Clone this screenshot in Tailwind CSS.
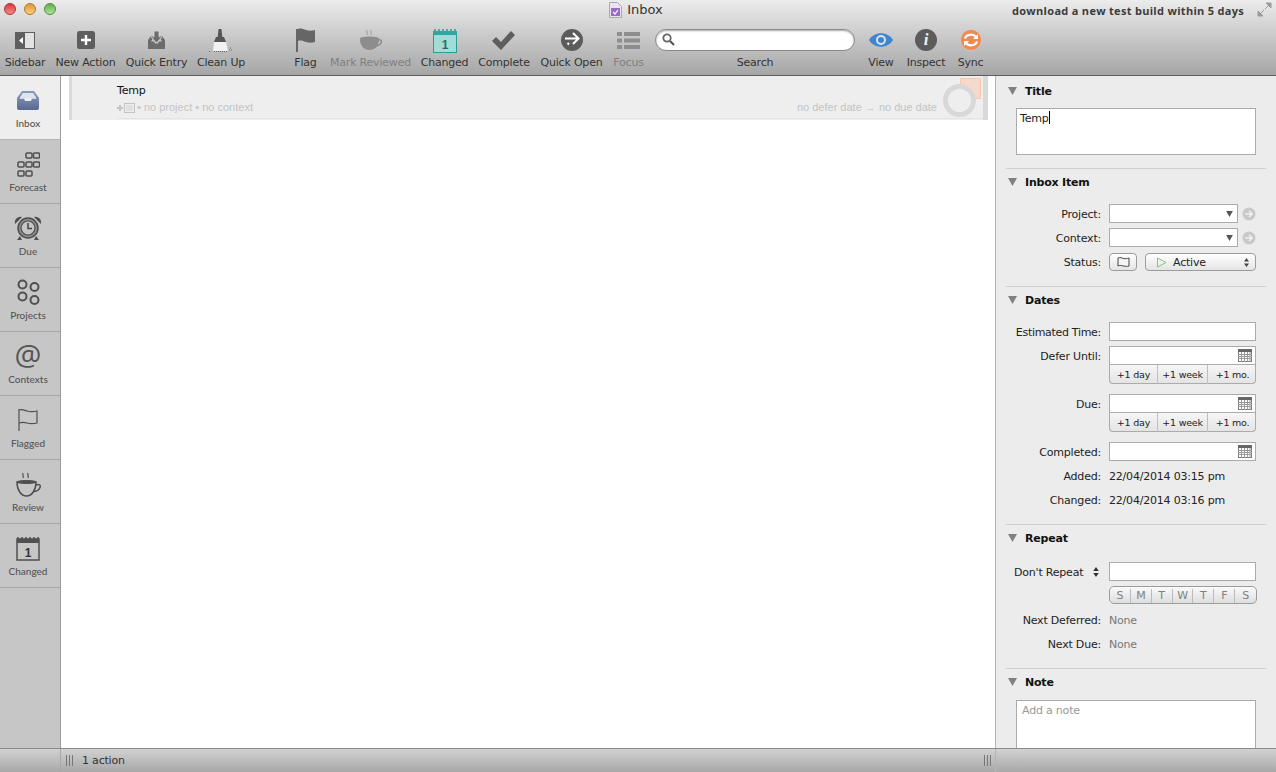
<!DOCTYPE html>
<html lang="en">
<head>
  <meta charset="UTF-8" />
  <title>Inbox</title>
  <script src="https://cdn.jsdelivr.net/npm/@tailwindcss/browser@4"></script>
</head>
<body class="w-[1276px] h-[772px] overflow-hidden flex flex-col bg-white text-[11px] text-[#222] [font-family:'DejaVu_Sans',sans-serif] tracking-[-0.2px] whitespace-nowrap">
  <svg class="hidden">
    <symbol id="cal" viewBox="0 0 14 13">
      <rect x="0.5" y="0.5" width="13" height="12" fill="#fff" stroke="#777"/>
      <rect x="0" y="0" width="14" height="3" fill="#666"/>
      <path d="M0 5.5h14M0 7.5h14M0 9.5h14M3.5 3v10M6.5 3v10M9.5 3v10M12 3v10" stroke="#999" stroke-width="1" fill="none"/>
    </symbol>
    <symbol id="go" viewBox="0 0 14 14">
      <circle cx="7" cy="7" r="6.5" fill="#c8c8c8"/>
      <path d="M3 7h7M7 3.8 10.2 7 7 10.2" stroke="#f0f0f0" stroke-width="1.4" fill="none"/>
    </symbol>
    <symbol id="tri" viewBox="0 0 9 8">
      <path d="M0 0h9L4.5 8z" fill="#808080"/>
    </symbol>
  </svg>

  <!-- title bar + toolbar -->
  <header class="h-[76px] shrink-0 bg-gradient-to-b from-[#ececec] to-[#a6a6a6] border-b border-[#5c5c5c] flex flex-col">
    <div class="h-[20px] relative flex items-center justify-center">
      <div class="absolute left-[4px] top-[3px] flex gap-[8px]">
        <span class="w-[12px] h-[12px] rounded-full border border-[#a33] bg-gradient-to-b from-[#d9363a] to-[#f58a8a]"></span>
        <span class="w-[12px] h-[12px] rounded-full border border-[#b07a2c] bg-gradient-to-b from-[#e0952f] to-[#fbd084]"></span>
        <span class="w-[12px] h-[12px] rounded-full border border-[#4f8f3f] bg-gradient-to-b from-[#5fae4a] to-[#b2e39c]"></span>
      </div>
      <div class="flex items-center gap-[5px] ml-[-4px]">
        <svg width="13" height="16" viewBox="0 0 13 16"><path d="M.5.5h8l4 4v11H.5z" fill="#e9e4f0" stroke="#aaa"/><rect x="2" y="6" width="9" height="8" fill="#9a6cc4"/><path d="M4 10l2 2 3-4" stroke="#fff" stroke-width="1.2" fill="none"/></svg>
        <span class="text-[13px] text-[#333] tracking-normal">Inbox</span>
      </div>
      <span class="absolute left-[1012px] top-[3px] font-bold text-[#3c3c3c] [font-family:'Open_Sans',sans-serif] tracking-[0.3px]">download a new test build within 5 days</span>
      <svg class="absolute left-[1257px] top-[2px]" width="15" height="15" viewBox="0 0 15 15"><path d="M9 1h5v5zM1 9v5h5zM11 4 8 7M4 11l3-3" fill="#9a9a9a" stroke="#9a9a9a"/></svg>
    </div>

    <div class="flex-1 flex pl-[5px] text-[#333]">
      <div class="w-[40px] flex flex-col items-center">
        <div class="h-[35px] pt-[5px] flex items-center">
          <svg width="20" height="17" viewBox="0 0 20 17"><rect width="20" height="17" fill="#5f5f5f"/><rect x="10" y="1" width="9" height="15" fill="#e2e2e2"/><path d="M8 5v7L4 8.5z" fill="#fff"/></svg>
        </div>
        <span>Sidebar</span>
      </div>
      <div class="w-[61px] ml-[10px] flex flex-col items-center">
        <div class="h-[35px] pt-[5px] flex items-center">
          <svg width="18" height="18" viewBox="0 0 18 18"><rect width="18" height="18" rx="2.5" fill="#5e5e5e"/><path d="M9 4v10M4 9h10" stroke="#fff" stroke-width="2.4"/></svg>
        </div>
        <span>New Action</span>
      </div>
      <div class="w-[61px] ml-[10px] flex flex-col items-center">
        <div class="h-[35px] pt-[5px] flex items-center">
          <svg width="19" height="20" viewBox="0 0 19 20"><path d="M1 10 4 6h3v3H5.500L4 11.500h3l1 2h3l1-2h3L13.500 9H12V6h3l3 4v9H1z" fill="#6c6c6c"/><path d="M7 1h5v6h3l-5.500 6L4 7h3z" fill="#6c6c6c" stroke="#ddd" stroke-width=".8"/></svg>
        </div>
        <span>Quick Entry</span>
      </div>
      <div class="w-[48px] ml-[10px] flex flex-col items-center">
        <div class="h-[35px] pt-[5px] flex items-center">
          <svg width="24" height="25" viewBox="0 0 24 25"><path d="M9.500 1h3l.8 8h-4.600z" fill="#555"/><path d="M7 9h8l2 5H5z" fill="#555"/><path d="M5 14h12l2 9H4z" fill="#f2f2f2"/><path d="M0 23.500h2M5 23.500h14M20 22h3M21 20h2" stroke="#666" stroke-dasharray="1 1"/></svg>
        </div>
        <span>Clean Up</span>
      </div>
      <div class="w-[21px] ml-[50px] flex flex-col items-center">
        <div class="h-[35px] pt-[5px] flex items-center">
          <svg width="20" height="24" viewBox="0 0 20 24"><path d="M1 1v23" stroke="#666" stroke-width="2"/><path d="M2 1c3-1 5 0 8 1s6 1 9 0v12c-3 1-6 1-9 0s-5-2-8-1z" fill="#666"/></svg>
        </div>
        <span>Flag</span>
      </div>
      <div class="w-[79px] ml-[15px] flex flex-col items-center text-[#808080]">
        <div class="h-[35px] pt-[4px] flex items-center">
          <svg width="22" height="22" viewBox="0 0 22 22"><path d="M7 1c-1 2 1 2 0 5M11 1c-1 2 1 2 0 5" stroke="#999" fill="none"/><ellipse cx="9.500" cy="9.500" rx="9.500" ry="2" fill="#8d8d8d"/><path d="M0 10h19c0 7-4 11-9.500 11S0 17 0 10z" fill="#8d8d8d"/><path d="M18 11c3-1 4 1 3 3s-4 3-6 3" stroke="#8d8d8d" stroke-width="1.600" fill="none"/></svg>
        </div>
        <span>Mark Reviewed</span>
      </div>
      <div class="w-[47px] ml-[11px] flex flex-col items-center">
        <div class="h-[35px] pt-[5px] flex items-center">
          <svg width="24" height="25" viewBox="0 0 24 25"><rect x="0.500" y="3.500" width="23" height="21" fill="#a3dbd6" stroke="#2d9c97"/><rect x="0" y="3" width="24" height="4" fill="#2fa8a2"/><path d="M2 3V1M6 3V1M10 3V1M14 3V1M18 3V1M22 3V1" stroke="#2d9c97" stroke-width="1.500"/><text x="12" y="21" text-anchor="middle" font-size="12" font-weight="bold" fill="#1f6f6b" font-family="Liberation Sans">1</text></svg>
        </div>
        <span>Changed</span>
      </div>
      <div class="w-[52px] ml-[10px] flex flex-col items-center">
        <div class="h-[35px] pt-[5px] flex items-center">
          <svg width="24" height="19" viewBox="0 0 24 19"><path d="M0 10l4-4 5 5L19 0l4 4L9 19z" fill="#5e5e5e"/></svg>
        </div>
        <span>Complete</span>
      </div>
      <div class="w-[63px] ml-[10px] flex flex-col items-center">
        <div class="h-[35px] pt-[5px] flex items-center">
          <svg width="22" height="22" viewBox="0 0 22 22"><circle cx="11" cy="11" r="11" fill="#5c5c5c"/><path d="M4 9.500h13M12 4l5.500 5.500L12 15M8 15.500 6.500 14" stroke="#fff" stroke-width="2" fill="none"/></svg>
        </div>
        <span>Quick Open</span>
      </div>
      <div class="w-[31px] ml-[10px] flex flex-col items-center text-[#808080]">
        <div class="h-[35px] pt-[5px] flex items-center">
          <svg width="23" height="17" viewBox="0 0 23 17"><path d="M0 0h5v4H0zM7 0h16v4H7zM0 6.500h5v4H0zM7 6.500h16v4H7zM0 13h5v4H0zM7 13h16v4H7z" fill="#8e8e8e"/></svg>
        </div>
        <span>Focus</span>
      </div>
      <div class="w-[200px] ml-[11px] flex flex-col items-center">
        <div class="h-[35px] pt-[4px] flex items-center w-full">
          <div class="w-full h-[22px] rounded-full bg-white border border-[#8a8a8a] shadow-[inset_0_1px_2px_#aaa] flex items-center pl-[6px]">
            <svg width="13" height="13" viewBox="0 0 13 13"><circle cx="5" cy="5" r="3.700" fill="none" stroke="#666" stroke-width="1.800"/><path d="M8 8l4 4" stroke="#555" stroke-width="2.200"/></svg>
          </div>
        </div>
        <span>Search</span>
      </div>
      <div class="w-[26px] ml-[13px] flex flex-col items-center">
        <div class="h-[35px] pt-[5px] flex items-center">
          <svg width="24" height="14" viewBox="0 0 24 14"><path d="M0 7c5-9 19-9 24 0-5 9-19 9-24 0z" fill="#3f85cf"/><circle cx="12" cy="7" r="5" fill="#d8e6f5"/><circle cx="12" cy="7" r="3" fill="#3f85cf"/></svg>
        </div>
        <span>View</span>
      </div>
      <div class="w-[38px] ml-[13px] flex flex-col items-center">
        <div class="h-[35px] pt-[5px] flex items-center">
          <div class="w-[22px] h-[22px] rounded-full bg-[#5c5c5c] text-[#f0f0f0] flex items-center justify-center font-bold italic text-[17px] [font-family:'Liberation_Serif',serif]">i</div>
        </div>
        <span>Inspect</span>
      </div>
      <div class="w-[25px] ml-[13px] flex flex-col items-center">
        <div class="h-[35px] pt-[5px] flex items-center">
          <svg width="22" height="22" viewBox="0 0 22 22"><circle cx="11" cy="11" r="10.500" fill="#ee8a55" stroke="#d9d9d9" stroke-width=".6"/><path d="M5 9.500c1-4 8-5.500 11-1.500M17 12.500c-1 4-8 5.500-11 1.500" stroke="#fff" stroke-width="2.200" fill="none"/><path d="M18 5v5h-5zM4 17v-5h5z" fill="#fff"/></svg>
        </div>
        <span>Sync</span>
      </div>
    </div>
  </header>

  <div class="flex-1 flex min-h-0">
    <!-- left tabs -->
    <nav class="w-[61px] shrink-0 flex flex-col bg-[#c6c6c6] border-r border-[#9c9c9c] text-[10px] text-[#555] tracking-normal [font-family:'Lato',sans-serif] font-medium">
      <div class="h-[64px] w-[60px] -mr-px bg-[#eeeeee] border-b border-[#b4b4b4] flex flex-col items-center pr-[4px] shrink-0">
        <div class="h-[40px] pt-[8px] flex items-center">
          <svg width="22" height="19" viewBox="0 0 22 19"><defs><linearGradient id="ib" x1="0" x2="0" y1="0" y2="1"><stop offset="0" stop-color="#8a9abc"/><stop offset="1" stop-color="#5a6b93"/></linearGradient></defs><path d="M5 0h12l5 7v10a2 2 0 0 1-2 2H2a2 2 0 0 1-2-2V7zM6 2 2.500 7.500H7l1 2.500h6l1-2.500h4.500L16 2z" fill="url(#ib)" fill-rule="evenodd"/><path d="M6 2h10l3.500 5.500H2.500z" fill="#dfe3ec"/></svg>
        </div>
        <span>Inbox</span>
      </div>
      <div class="h-[64px] border-b border-[#a8a8a8] flex flex-col items-center pr-[4px] shrink-0">
        <div class="h-[40px] pt-[8px] flex items-center">
          <svg width="23" height="25" viewBox="0 0 23 25" fill="none" stroke="#4f4f4f" stroke-width="1.500"><rect x="9" y="1" width="6" height="5" rx="1"/><rect x="16.500" y="1" width="6" height="5" rx="1"/><rect x="1" y="10" width="6" height="5" rx="1"/><rect x="9" y="10" width="6" height="5" rx="1"/><rect x="16.500" y="10" width="6" height="5" rx="1"/><rect x="1" y="19" width="6" height="5" rx="1"/><rect x="9" y="19" width="6" height="5" rx="1"/></svg>
        </div>
        <span>Forecast</span>
      </div>
      <div class="h-[64px] border-b border-[#a8a8a8] flex flex-col items-center pr-[4px] shrink-0">
        <div class="h-[40px] pt-[8px] flex items-center">
          <svg width="28" height="25" viewBox="0 0 28 25"><path d="M1 8C0 3 4 0 8 1zM27 8c1-5-3-8-7-7z" fill="#4f4f4f"/><circle cx="14" cy="12" r="10" fill="#8a8a8a" stroke="#4f4f4f" stroke-width="1.500"/><circle cx="14" cy="12" r="7" fill="#c6c6c6" stroke="#4f4f4f" stroke-width="1.200"/><path d="M14 7v5.500h4" stroke="#444" stroke-width="1.500" fill="none"/><path d="M6 20l-3 4h5zM22 20l3 4h-5z" fill="#4f4f4f"/></svg>
        </div>
        <span>Due</span>
      </div>
      <div class="h-[64px] border-b border-[#a8a8a8] flex flex-col items-center pr-[4px] shrink-0">
        <div class="h-[40px] pt-[8px] flex items-center">
          <svg width="23" height="26" viewBox="0 0 23 26" fill="none" stroke="#4f4f4f" stroke-width="2"><circle cx="5.500" cy="5.500" r="4"/><circle cx="17.500" cy="8" r="4"/><circle cx="5.500" cy="17.500" r="4"/><circle cx="17.500" cy="21" r="4"/></svg>
        </div>
        <span>Projects</span>
      </div>
      <div class="h-[64px] border-b border-[#a8a8a8] flex flex-col items-center pr-[4px] shrink-0">
        <div class="h-[40px] pt-[6px] flex items-center text-[30px] leading-none text-[#555] font-normal [font-family:'Open_Sans',sans-serif]">@</div>
        <span>Contexts</span>
      </div>
      <div class="h-[64px] border-b border-[#a8a8a8] flex flex-col items-center pr-[4px] shrink-0">
        <div class="h-[40px] pt-[8px] flex items-center">
          <svg width="20" height="22" viewBox="0 0 20 22" fill="none" stroke="#4f4f4f" stroke-width="1.200"><path d="M1 0v22"/><path d="M1 1c3-1 5 0 8 1s6 1 10 0v12c-4 1-7 1-10 0s-5-1-8 0"/></svg>
        </div>
        <span>Flagged</span>
      </div>
      <div class="h-[64px] border-b border-[#a8a8a8] flex flex-col items-center pr-[4px] shrink-0">
        <div class="h-[40px] pt-[8px] flex items-center">
          <svg width="25" height="25" viewBox="0 0 25 25" fill="none" stroke="#4f4f4f"><path d="M7 1c-1 2 1 2 0 5M12 1c-1 2 1 2 0 5" stroke-width="1.200"/><path d="M1 10h19c0 8-4 14-9.500 14S1 18 1 10z" stroke-width="1.500"/><ellipse cx="10.500" cy="10" rx="9.500" ry="1.500" fill="#4f4f4f"/><path d="M20 13c3-1 5 0 4 2.500s-4 4-6.500 4" stroke-width="1.500"/></svg>
        </div>
        <span>Review</span>
      </div>
      <div class="h-[64px] border-b border-[#a8a8a8] flex flex-col items-center pr-[4px] shrink-0">
        <div class="h-[40px] pt-[8px] flex items-center">
          <svg width="24" height="25" viewBox="0 0 24 25"><rect x="1" y="3" width="22" height="21" fill="#c6c6c6" stroke="#4f4f4f" stroke-width="1.500"/><rect x="1" y="3" width="22" height="4" fill="#4f4f4f"/><path d="M2 3V1M6 3V1M10 3V1M14 3V1M18 3V1M22 3V1" stroke="#4f4f4f" stroke-width="1.500"/><text x="12" y="21" text-anchor="middle" font-size="12" font-weight="bold" fill="#333" font-family="Liberation Sans">1</text></svg>
        </div>
        <span>Changed</span>
      </div>
    </nav>

    <!-- main list -->
    <main class="flex-1 min-w-0 bg-white pl-[8px] pr-[7px]">
      <div class="relative h-[44px] bg-[#eeeeee] border-l-[3px] border-r-[5px] border-[#d9d9d9] flex flex-col pl-[45px]">
        <div class="h-[29px] pt-[7px] text-[#111] leading-[15px]">Temp</div>
        <div class="flex items-center text-[#c4c4c4] tracking-normal [font-family:'Liberation_Sans',sans-serif] border-b border-[#e4e4e4] h-[15px] -mt-[5px] pb-[3px] box-content">
          <svg width="18" height="10" viewBox="0 0 18 10"><path d="M3 2v6M0 5h6" stroke="#c4c4c4" stroke-width="2"/><rect x="7.500" y="0.500" width="10" height="9" fill="none" stroke="#c4c4c4"/><path d="M9 3h7M9 5h7M9 7h7" stroke="#c4c4c4" stroke-width=".7"/></svg>
          <span class="ml-[2px]">• no project • no context</span>
          <span class="ml-auto mr-[46px]">no defer date → no due date</span>
        </div>
        <div class="absolute right-[2px] top-[2px] w-[21px] h-[21px] bg-[#f6d8cc] border border-[#f7c8ae]"></div>
        <div class="absolute right-[7px] top-[8px] w-[33px] h-[33px] rounded-full border-[5px] border-[#d8d8d8] bg-[#eeeeee]"></div>
      </div>
    </main>

    <!-- inspector -->
    <aside class="w-[281px] shrink-0 bg-[#ececec] border-l border-[#b4b4b4] pl-[10px] pr-[10px] overflow-hidden text-[#222]">
      <section class="h-[93px] border-b border-[#cfcfcf] pt-[8px]">
        <div class="flex items-center h-[14px] font-bold text-[#111] gap-[8px] pl-[2px]">
          <svg width="9" height="8"><use href="#tri"/></svg><span class="pt-[2px]">Title</span>
        </div>
        <div class="mt-[10px] ml-[10px] w-[240px] h-[47px] bg-white border border-[#ababab] px-[3px] py-[2px] leading-[14px]">Temp<span class="inline-block w-px h-[13px] bg-black align-[-2px]"></span></div>
      </section>

      <section class="h-[118px] border-b border-[#cfcfcf] pt-[6px]">
        <div class="flex items-center h-[14px] font-bold text-[#111] gap-[8px] pl-[2px]">
          <svg width="9" height="8"><use href="#tri"/></svg><span class="pt-[2px]">Inbox Item</span>
        </div>
        <div class="mt-[15px] flex flex-col gap-[5px]">
          <div class="flex items-center h-[19px]">
            <label class="w-[95px] text-right pt-[4px]">Project:</label>
            <div class="ml-[8px] w-[129px] h-[19px] bg-white border border-[#ababab] flex items-center justify-end pr-[4px]"><svg width="7" height="6" viewBox="0 0 9 8"><path d="M0 0h9L4.500 8z" fill="#555"/></svg></div>
            <svg class="ml-[4px]" width="14" height="14"><use href="#go"/></svg>
          </div>
          <div class="flex items-center h-[19px]">
            <label class="w-[95px] text-right pt-[4px]">Context:</label>
            <div class="ml-[8px] w-[129px] h-[19px] bg-white border border-[#ababab] flex items-center justify-end pr-[4px]"><svg width="7" height="6" viewBox="0 0 9 8"><path d="M0 0h9L4.500 8z" fill="#555"/></svg></div>
            <svg class="ml-[4px]" width="14" height="14"><use href="#go"/></svg>
          </div>
          <div class="flex items-center h-[19px]">
            <label class="w-[95px] text-right pt-[4px]">Status:</label>
            <div class="ml-[8px] mt-[1px] w-[28px] h-[18px] rounded-[4px] border border-[#9c9c9c] bg-gradient-to-b from-[#ffffff] to-[#e4e4e4] flex items-center justify-center">
              <svg width="13" height="10" viewBox="0 0 13 10"><path d="M1 1c3-1 3 0 5.500 .5S10 1.500 12 1v8c-2 .5-3 .5-5.500 0S3 8 1 9z" fill="#f4f4f4" stroke="#444"/></svg>
            </div>
            <div class="ml-[8px] mt-[1px] w-[111px] h-[18px] rounded-[4px] border border-[#9c9c9c] bg-gradient-to-b from-[#ffffff] to-[#e4e4e4] flex items-center pl-[11px] pr-[6px]">
              <svg width="10" height="11" viewBox="0 0 10 11"><path d="M.5 1l8.500 4.500L.5 10z" fill="none" stroke="#7ec57a"/></svg>
              <span class="ml-[6px] pt-[2px]">Active</span>
              <svg class="ml-auto" width="5" height="9" viewBox="0 0 5 9"><path d="M2.500 0 5 3.500H0zM2.500 9 5 5.500H0z" fill="#444"/></svg>
            </div>
          </div>
        </div>
      </section>

      <section class="h-[238px] border-b border-[#cfcfcf] pt-[6px]">
        <div class="flex items-center h-[14px] font-bold text-[#111] gap-[8px] pl-[2px]">
          <svg width="9" height="8"><use href="#tri"/></svg><span class="pt-[2px]">Dates</span>
        </div>
        <div class="mt-[15px] flex items-center h-[19px]">
          <label class="w-[95px] text-right pt-[4px] tracking-[-0.3px]">Estimated Time:</label>
          <div class="ml-[8px] w-[147px] h-[19px] bg-white border border-[#ababab]"></div>
        </div>
        <div class="mt-[5px] flex items-start">
          <label class="w-[95px] text-right leading-[19px] pt-[1px]">Defer Until:</label>
          <div class="ml-[8px] w-[147px]">
            <div class="h-[19px] bg-white border border-[#ababab] flex items-center justify-end pr-[3px]"><svg width="14" height="13"><use href="#cal"/></svg></div>
            <div class="h-[19px] grid grid-cols-[48px_50px_49px] text-[9.5px] text-center leading-[19px] border border-t-0 border-[#ababab] rounded-b-[4px] bg-gradient-to-b from-[#f6f6f6] to-[#e4e4e4]">
              <span class="border-r border-[#c0c0c0]">+1 day</span><span class="border-r border-[#c0c0c0]">+1 week</span><span>+1 mo.</span>
            </div>
          </div>
        </div>
        <div class="mt-[10px] flex items-start">
          <label class="w-[95px] text-right leading-[19px] pt-[1px]">Due:</label>
          <div class="ml-[8px] w-[147px]">
            <div class="h-[19px] bg-white border border-[#ababab] flex items-center justify-end pr-[3px]"><svg width="14" height="13"><use href="#cal"/></svg></div>
            <div class="h-[19px] grid grid-cols-[48px_50px_49px] text-[9.5px] text-center leading-[19px] border border-t-0 border-[#ababab] rounded-b-[4px] bg-gradient-to-b from-[#f6f6f6] to-[#e4e4e4]">
              <span class="border-r border-[#c0c0c0]">+1 day</span><span class="border-r border-[#c0c0c0]">+1 week</span><span>+1 mo.</span>
            </div>
          </div>
        </div>
        <div class="mt-[10px] flex items-center h-[19px]">
          <label class="w-[95px] text-right pt-[4px]">Completed:</label>
          <div class="ml-[8px] w-[147px] h-[19px] bg-white border border-[#ababab] flex items-center justify-end pr-[3px]"><svg width="14" height="13"><use href="#cal"/></svg></div>
        </div>
        <div class="mt-[5px] flex items-center h-[19px]">
          <label class="w-[95px] text-right pt-[4px]">Added:</label>
          <span class="ml-[8px] pt-[4px]">22/04/2014 03:15 pm</span>
        </div>
        <div class="mt-[5px] flex items-center h-[19px]">
          <label class="w-[95px] text-right pt-[4px]">Changed:</label>
          <span class="ml-[8px] pt-[4px]">22/04/2014 03:16 pm</span>
        </div>
      </section>

      <section class="h-[144px] border-b border-[#cfcfcf] pt-[6px]">
        <div class="flex items-center h-[14px] font-bold text-[#111] gap-[8px] pl-[2px]">
          <svg width="9" height="8"><use href="#tri"/></svg><span class="pt-[2px]">Repeat</span>
        </div>
        <div class="mt-[17px] flex items-center h-[19px]">
          <label class="w-[71px] ml-[8px] text-left pt-[4px]">Don't Repeat</label>
          <svg class="ml-[8px] mt-[1px]" width="6" height="10" viewBox="0 0 5 9"><path d="M2.500 0 5 3.500H0zM2.500 9 5 5.500H0z" fill="#333"/></svg>
          <div class="ml-[10px] w-[147px] h-[19px] bg-white border border-[#ababab]"></div>
        </div>
        <div class="mt-[5px] ml-[103px] w-[148px] h-[18px] rounded-[5px] border border-[#9c9c9c] bg-gradient-to-b from-[#fafafa] to-[#dedede] grid grid-cols-7 text-center text-[#808080]">
          <span class="border-r border-[#bbb] my-[2px] leading-[14px]">S</span><span class="border-r border-[#bbb] my-[2px] leading-[14px]">M</span><span class="border-r border-[#bbb] my-[2px] leading-[14px]">T</span><span class="border-r border-[#bbb] my-[2px] leading-[14px]">W</span><span class="border-r border-[#bbb] my-[2px] leading-[14px]">T</span><span class="border-r border-[#bbb] my-[2px] leading-[14px]">F</span><span class="my-[2px] leading-[14px]">S</span>
        </div>
        <div class="mt-[6px] flex items-center h-[19px]">
          <label class="w-[95px] text-right pt-[4px]">Next Deferred:</label>
          <span class="ml-[8px] text-[#777] pt-[4px]">None</span>
        </div>
        <div class="mt-[5px] flex items-center h-[19px]">
          <label class="w-[95px] text-right pt-[4px]">Next Due:</label>
          <span class="ml-[8px] text-[#777] pt-[4px]">None</span>
        </div>
      </section>

      <section class="pt-[6px]">
        <div class="flex items-center h-[14px] font-bold text-[#111] gap-[8px] pl-[2px]">
          <svg width="9" height="8"><use href="#tri"/></svg><span class="pt-[2px]">Note</span>
        </div>
        <div class="mt-[11px] ml-[10px] w-[240px] h-[80px] bg-white border border-[#ababab] px-[5px] py-[3px] text-[#999] leading-[14px]">Add a note</div>
      </section>
    </aside>
  </div>

  <!-- status bar -->
  <footer class="h-[24px] shrink-0 border-t border-[#8a8a8a] bg-gradient-to-b from-[#d2d2d2] to-[#a8a8a8] flex items-center text-[#333]">
    <div class="w-[61px] h-full border-r border-[#a8a8a8]"></div>
    <div class="flex-1 h-full flex items-center pl-[5px] pr-[4px]">
      <svg width="7" height="11" viewBox="0 0 7 11"><path d="M.5 0v11M3.500 0v11M6.500 0v11" stroke="#777"/></svg>
      <span class="ml-[9px] pt-[2px]">1 action</span>
      <svg class="ml-auto" width="7" height="11" viewBox="0 0 7 11"><path d="M.5 0v11M3.500 0v11M6.500 0v11" stroke="#777"/></svg>
    </div>
    <div class="w-[281px] h-full border-l border-[#b4b4b4]"></div>
  </footer>
</body>
</html>
